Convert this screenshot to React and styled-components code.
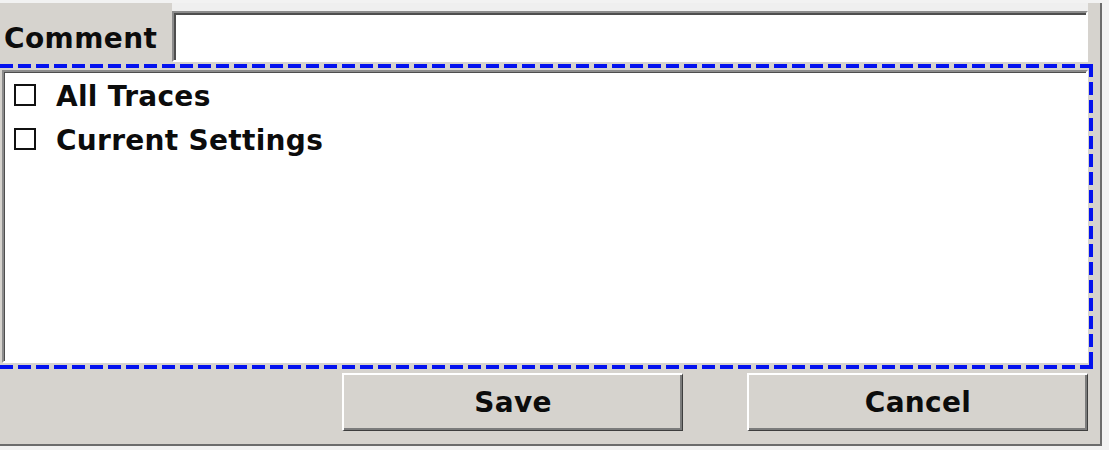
import React from "react";
import styled, { createGlobalStyle } from "styled-components";

const GlobalStyle = createGlobalStyle`
  html, body {
    margin: 0;
    padding: 0;
    background: #f2f2f2;
  }
  body {
    font-family: "DejaVu Sans", Verdana, sans-serif;
    color: #0c0c0c;
  }
`;

const BLUE = "#0412ee";

const Panel = styled.div`
  margin-top: 3px;
  width: 1100px;
  height: 441px;
  display: flex;
  flex-direction: column;
  background: #d6d3ce;
  border-right: 2px solid #6c6c6c;
  border-bottom: 2px solid #6c6c6c;
`;

const CommentRow = styled.div`
  display: flex;
  align-items: flex-start;
  height: 61px;
`;

const Label = styled.div`
  width: 168px;
  padding: 19px 0 0 4px;
  font-size: 28px;
  font-weight: 700;
  line-height: 34px;
  letter-spacing: 0.4px;
  white-space: nowrap;
`;

const InputCell = styled.div`
  flex: 1;
  margin-right: 12px;
  padding-top: 8px;
  background: linear-gradient(#efefef, #efefef) top / 100% 8px no-repeat;
`;

const TextInput = styled.input`
  display: block;
  box-sizing: border-box;
  width: 100%;
  height: 51px;
  margin: 0;
  padding: 0 8px;
  border-style: solid;
  border-width: 2px;
  border-color: #8c8c8c #ffffff #ffffff #8c8c8c;
  box-shadow: inset 2px 2px 0 #4e4e4e;
  background: #ffffff;
  font: 700 26px "DejaVu Sans", sans-serif;
  outline: none;
`;

const FocusFrame = styled.div`
  width: 1093px;
  height: 305px;
  box-sizing: border-box;
  padding: 6px 5px 6px 2px;
  background-image:
    repeating-linear-gradient(90deg, ${BLUE} 0 13px, transparent 13px 18px),
    repeating-linear-gradient(90deg, ${BLUE} 0 13px, transparent 13px 18px),
    repeating-linear-gradient(180deg, ${BLUE} 0 13px, transparent 13px 18px);
  background-size: 100% 4px, 100% 4px, 4px 100%;
  background-position: top left, bottom left, top right;
  background-repeat: no-repeat;
`;

const ListBox = styled.div`
  height: 100%;
  box-sizing: border-box;
  padding: 3px 0 0 10px;
  background: #ffffff;
  border-style: solid;
  border-width: 2px;
  border-color: #8c8c8c #ffffff #ffffff #8c8c8c;
  box-shadow: inset 1px 1px 0 #4e4e4e;
  display: flex;
  flex-direction: column;
`;

const Option = styled.label`
  height: 44px;
  display: flex;
  align-items: flex-start;
  gap: 20px;
  font-size: 28px;
  font-weight: 700;
  line-height: 44px;
  letter-spacing: 0.3px;
  white-space: nowrap;
`;

const Box = styled.span`
  margin-top: 9px;
  width: 22px;
  height: 22px;
  box-sizing: border-box;
  border: 2px solid #111111;
  background: #ffffff;
  flex-shrink: 0;
`;

const ButtonRow = styled.div`
  flex: 1;
  display: flex;
  justify-content: flex-end;
  align-items: flex-start;
  gap: 64px;
  padding: 4px 12px 0 0;
`;

const Button = styled.button`
  width: 341px;
  height: 58px;
  margin: 0;
  padding: 0;
  box-sizing: border-box;
  display: flex;
  align-items: center;
  justify-content: center;
  background: #d6d3ce;
  border-style: solid;
  border-width: 2px 1px 1px 2px;
  border-color: #ffffff #3e3e3e #3e3e3e #ffffff;
  box-shadow: inset -2px -2px 0 #7c7c7c;
  font: 700 28px "DejaVu Sans", sans-serif;
  letter-spacing: 0.3px;
  color: #0c0c0c;
  cursor: pointer;
`;

const options = ["All Traces", "Current Settings"];

export default function App() {
  return (
    <>
      <GlobalStyle />
      <Panel>
        <CommentRow>
          <Label>Comment</Label>
          <InputCell>
            <TextInput type="text" defaultValue="" />
          </InputCell>
        </CommentRow>
        <FocusFrame>
          <ListBox>
            {options.map((name) => (
              <Option key={name}>
                <Box />
                {name}
              </Option>
            ))}
          </ListBox>
        </FocusFrame>
        <ButtonRow>
          <Button>Save</Button>
          <Button>Cancel</Button>
        </ButtonRow>
      </Panel>
    </>
  );
}
